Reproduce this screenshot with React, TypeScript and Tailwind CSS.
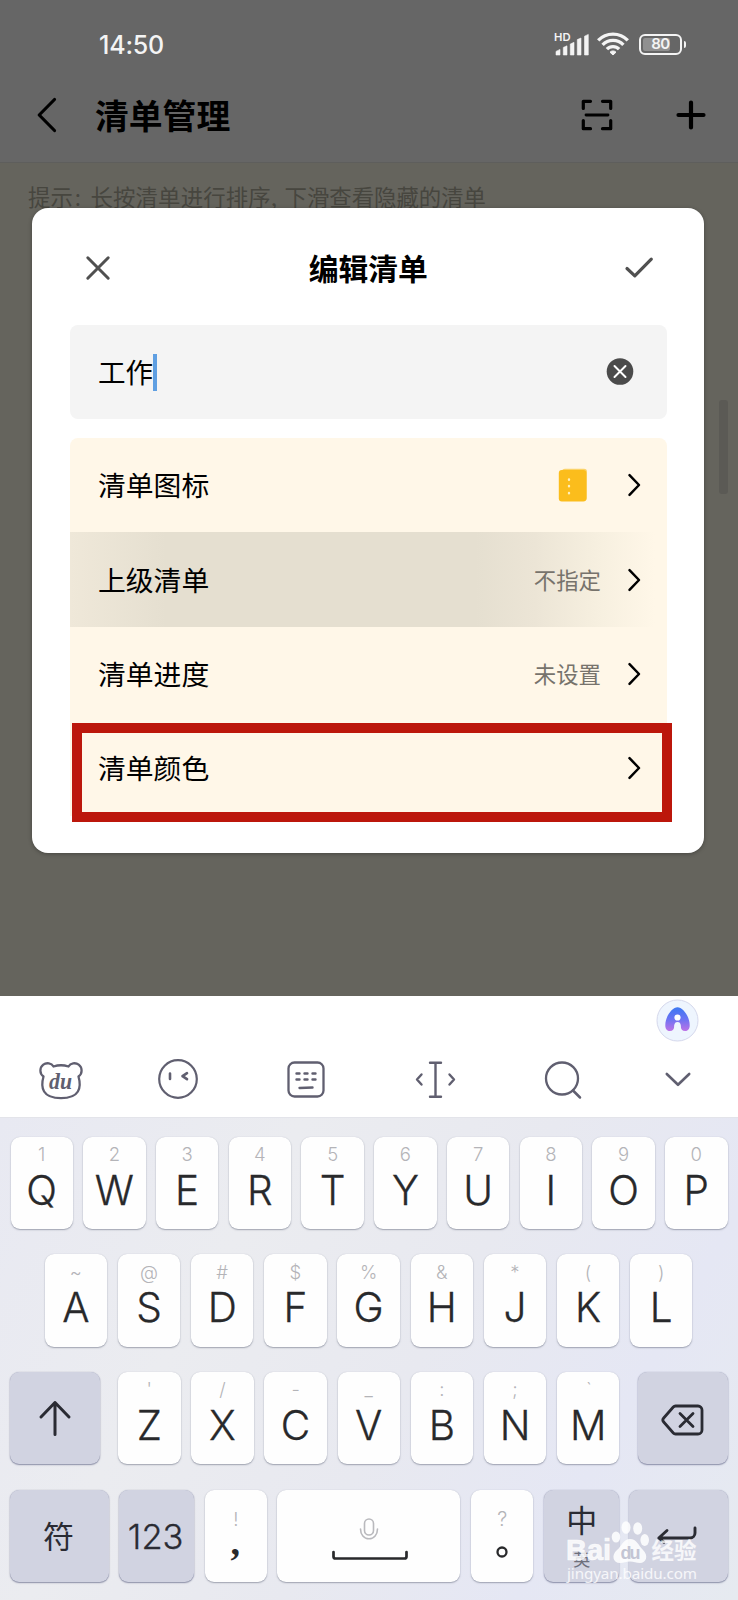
import React from "react";

type IconProps = { children: React.ReactNode; w: number; h: number; className?: string };

function Icon({ children, w, h, className = "" }: IconProps) {
  return (
    <svg
      width={w}
      height={h}
      viewBox={`0 0 ${w} ${h}`}
      fill="none"
      stroke="currentColor"
      strokeLinecap="round"
      strokeLinejoin="round"
      className={`block shrink-0 ${className}`}
    >
      {children}
    </svg>
  );
}

function StatusBar() {
  return (
    <div className="flex h-[88px] items-center pl-[99px] pr-[52px] text-[#f4f4f4]">
      <span className="mt-[1px] font-['Inter'] text-[25px] leading-[30px] font-medium tracking-[-0.2px]">14:50</span>
      <div className="ml-auto flex items-center">
        <svg width="36" height="26" viewBox="0 0 36 26" className="block" fill="#f4f4f4">
          <text x="0" y="9.5" fontSize="11" fontWeight="600" fontFamily="Inter, sans-serif" textLength="16.5" lengthAdjust="spacingAndGlyphs">
            HD
          </text>
          <path d="M2 24v-3.6l4-2V24zM9.3 24v-7.6l3.7-1.6V24zM16.3 24V13l3.7-1.7V24zM23.3 24V8.6L27 7v17zM30.5 24V5.2L34.3 3.4V24z" stroke="#f4f4f4" strokeWidth=".6" strokeLinejoin="round" />
        </svg>
        <svg width="34" height="26" viewBox="0 0 34 26" className="ml-[6px] block" fill="none" stroke="#f4f4f4" strokeWidth="3.3">
          <path d="M2.2 9.4a20.5 20.5 0 0 1 29.6 0" />
          <path d="M6.6 13.9a14.2 14.2 0 0 1 20.8 0" />
          <path d="M10.9 18.2a8.4 8.4 0 0 1 12.2 0" />
          <path d="M14 21.2a4.2 4.2 0 0 1 6 0L17 24z" fill="#f4f4f4" strokeWidth="1" strokeLinejoin="round" />
        </svg>
        <div className="relative ml-[9px] flex h-[21px] w-[43px] items-center justify-center rounded-[6px] border-2 border-[#f4f4f4]">
          <div className="absolute top-[2px] left-[2px] h-[13px] w-[27px] rounded-[2px] bg-[#909090]" />
          <span className="relative font-['Inter'] text-[15px] leading-[16px] font-semibold tracking-[-0.5px]">80</span>
        </div>
        <div className="ml-[1.5px] h-[7px] w-[2.5px] rounded-r-full bg-[#f4f4f4]" />
      </div>
    </div>
  );
}

function Header() {
  return (
    <div className="flex h-[75px] items-start border-b border-[#5e5e5c] pr-[32px] pl-[36px] text-black">
      <Icon w={22} h={36} className="mt-[9px]">
        <path d="M18.5 2.5 3.2 18l15.3 15.5" strokeWidth="3.2" />
      </Icon>
      <h1 className="mt-[4px] ml-[37px] font-['Noto_Sans_CJK_SC'] text-[33.8px] leading-[46px] font-bold">清单管理</h1>
      <div className="mt-[10px] ml-auto flex items-center gap-[62px]">
        <Icon w={34} h={34}>
          <path d="M3.3 10.5V3.3h7.2M22.5 3.3h8.2v7.2M3.3 22.5v8.2h7.2M22.5 30.7h8.2v-8.2" strokeWidth="3.2" />
          <path d="M6 17h22" strokeWidth="2.8" />
        </Icon>
        <Icon w={30} h={32}>
          <path d="M15 3.5v25M2.5 16h25" strokeWidth="4.2" />
        </Icon>
      </div>
    </div>
  );
}

function Chevron() {
  return (
    <Icon w={16} h={26} className="text-black">
      <path d="M3.5 3.2 13 13 3.5 22.8" strokeWidth="2.5" />
    </Icon>
  );
}

function Row({ label, shade, children }: { label: string; shade?: boolean; children?: React.ReactNode }) {
  return (
    <div
      className={`flex h-[94.4px] items-center pr-[25px] pl-[28px] ${
        shade
          ? "bg-[linear-gradient(90deg,#efe8d9_0%,#e5dfd0_16%,#e5dfd0_68%,#ece5d6_78%,#f6efdf_88%,#fff7e8_98%)]"
          : ""
      }`}
    >
      <span className="-mt-[2px] font-['Noto_Sans_CJK_SC'] text-[27.8px] leading-[40px] text-black">{label}</span>
      <div className="ml-auto flex items-center gap-[25px]">
        {children}
        <Chevron />
      </div>
    </div>
  );
}

function Value({ text }: { text: string }) {
  return <span className="-mt-[2px] font-['Noto_Sans_CJK_SC'] text-[22.4px] leading-[30px] text-[#77736c]">{text}</span>;
}

function Dialog() {
  return (
    <div className="absolute top-[208px] left-[32px] h-[645px] w-[672px] rounded-[16px] bg-white px-[38px] shadow-[0_1px_4px_rgba(0,0,0,0.3)]">
      <div className="flex h-[117px] items-center justify-between pr-[11px] pl-[14px] text-[#505050]">
        <Icon w={28} h={28} className="mt-[2px] ml-[-0.5px]">
          <path d="M3.8 3.8l20.4 20.4M24.2 3.8l-20.4 20.4" strokeWidth="3" />
        </Icon>
        <h2 className="mt-[0px] ml-[2px] font-['Noto_Sans_CJK_SC'] text-[29.8px] leading-[40px] font-bold text-black">编辑清单</h2>
        <Icon w={32} h={24} className="mt-[1px]">
          <path d="M4 13.5l7.8 7.3L28.3 4.2" strokeWidth="3.2" />
        </Icon>
      </div>
      <div className="flex h-[94px] w-[597px] items-center rounded-[8px] bg-[#f4f4f4] pr-[33.500px] pl-[28px]">
        <span className="-mt-[3px] font-['Noto_Sans_CJK_SC'] text-[27.6px] leading-[40px] text-black">工作</span>
        <div className="h-[37px] w-[4px] bg-[#5f9fe2]" />
        <Icon w={28} h={28} className="ml-auto">
          <circle cx="14" cy="13.5" r="13.3" fill="#4b4b4b" stroke="none" />
          <path d="M8.5 8l11 11M19.5 8l-11 11" stroke="#fff" strokeWidth="2" />
        </Icon>
      </div>
      <div className="relative mt-[19px] w-[597px] rounded-t-[8px] bg-[#fff7e8]">
        <Row label="清单图标">
          <div className="mr-[13px]">
            <Icon w={30} h={34}>
              <rect x="4" y="0.8" width="25" height="32" rx="3" fill="#fbd368" stroke="none" />
              <rect x="0.8" y="2" width="27.5" height="31.5" rx="3" fill="#fbbd1c" stroke="none" />
              <path d="M11 11.5v.2M11 18v.2M11 25v.2" stroke="#fff0bc" strokeWidth="2.4" />
            </Icon>
          </div>
        </Row>
        <Row label="上级清单" shade>
          <Value text="不指定" />
        </Row>
        <Row label="清单进度">
          <Value text="未设置" />
        </Row>
        <Row label="清单颜色" />
        <div className="absolute top-[285px] left-[2px] h-[99px] w-[600px] border-[10.3px] border-[#bc170b]" />
      </div>
    </div>
  );
}

function Toolbar() {
  return (
    <div className="h-[121px] bg-white text-[#605f70]">
      <div className="flex h-[48px] items-center justify-end pr-[39px]">
        <svg width="43" height="43" viewBox="0 0 43 43" className="block">
          <defs>
            <linearGradient id="ai" x1="0" y1="0" x2="0" y2="1">
              <stop offset="0" stopColor="#3b78f2" />
              <stop offset=".5" stopColor="#6b73f3" />
              <stop offset="1" stopColor="#bd72e6" />
            </linearGradient>
          </defs>
          <circle cx="21.5" cy="21.5" r="20.5" fill="#eef5fe" stroke="#d5d8ec" />
          <path
            d="M21.5 8.2c5 0 12.2 8.8 12.2 18 0 3.2-1.3 5.8-4.5 5.8-3 0-4.4-2-4.4-4.6 0-2-1.300-3.200-3.300-3.200s-3.300 1.200-3.300 3.200c0 2.600-1.400 4.600-4.400 4.600-3.200 0-4.500-2.600-4.500-5.800 0-9.200 7.200-18 12.200-18z"
            fill="url(#ai)"
          />
          <circle cx="21.500" cy="18.500" r="3.100" fill="#fff" />
          <path d="M18.500 32v-6a3 3 0 0 1 6 0v6z" fill="#eef5fe" />
        </svg>
      </div>
      <div className="flex h-[73px] items-start pl-[37px]">
        <Icon w={48} h={44} className="mt-[15px] -ml-[0.500px] mr-[0.500px]">
          <path
            d="M16.5 7.500c4.500-1.500 10.500-1.500 15 0 2-3.500 7-4.300 10.200-1.800 4 3.100 3.800 9-.2 11.800 1.300 4.600 2 10.700-.6 15-3 5-10 6.700-16.900 6.700s-13.900-1.700-16.900-6.700c-2.600-4.300-1.900-10.400-.6-15-4-2.800-4.200-8.700-.2-11.800 3.200-2.500 8.200-1.700 10.200 1.800z"
            strokeWidth="2.3"
          />
          <text x="12" y="29.500" fontFamily="Liberation Serif, serif" fontStyle="italic" fontWeight="700" fontSize="24" fill="currentColor" stroke="none" textLength="23" lengthAdjust="spacingAndGlyphs">
            du
          </text>
        </Icon>
        <Icon w={42} h={42} className="ml-[71.500px] mt-[14px]">
          <circle cx="21" cy="21" r="18.800" strokeWidth="2.200" />
          <path d="M13 15.500v5.500M30 15.200l-4.500 3 4.500 3" strokeWidth="2.600" />
        </Icon>
        <Icon w={40} h={40} className="ml-[87.500px] mt-[15.500px]">
          <rect x="2.500" y="2.500" width="35" height="34" rx="6" strokeWidth="2.300" />
          <path d="M10.500 13.500h3M18.500 13.500h3M26.500 13.500h3M10.500 19.500h3M18.500 19.500h3M26.500 19.500h3M13.500 28l13-.5" strokeWidth="2.400" />
        </Icon>
        <Icon w={46} h={40} className="ml-[86.500px] mt-[15.500px]">
          <path d="M17 2.700h11M17 36.800h11M22.500 2.700v34" strokeWidth="2.400" />
          <path d="M8.500 14.500 4 19.500l4.500 5M36.500 14.500l4.500 5-4.500 5" strokeWidth="2.400" />
        </Icon>
        <Icon w={40} h={40} className="ml-[84.500px] mt-[15.500px]">
          <circle cx="19" cy="18.500" r="16" strokeWidth="2.300" />
          <path d="M30 30.500l7 7" strokeWidth="2.500" />
        </Icon>
        <Icon w={28} h={18} className="ml-[81px] mt-[27px]">
          <path d="M2.800 3 14 13.800 25.200 3" strokeWidth="2.600" />
        </Icon>
      </div>
    </div>
  );
}

const keyBase = "flex h-[92.5px] shrink-0 flex-col items-center rounded-[9px]";
const light = "bg-[#fefefe] shadow-[0_1px_1.500px_rgba(90,95,115,0.500),0_0_1px_rgba(120,125,150,0.300)]";
const dark = "justify-center bg-[#d1d3e1] text-[#2a2b33] shadow-[0_1px_1.500px_rgba(80,85,120,0.600),0_0_1px_rgba(110,115,150,0.500)]";

function LetterKey({ hint, letter }: { hint: string; letter: string }) {
  return (
    <div className={`${keyBase} ${light} w-[62.400px] pt-[7.500px] font-['Inter']`}>
      <span className="text-[18.500px] leading-[20px] font-light text-[#b4b4b8]">{hint}</span>
      <span className="mt-[6.500px] text-[40.500px] leading-[40px] font-light text-[#28292b] [-webkit-text-stroke:0.300px_#28292b]">{letter}</span>
    </div>
  );
}

const row1 = [["1", "Q"], ["2", "W"], ["3", "E"], ["4", "R"], ["5", "T"], ["6", "Y"], ["7", "U"], ["8", "I"], ["9", "O"], ["0", "P"]];
const row2 = [["~", "A"], ["@", "S"], ["#", "D"], ["$", "F"], ["%", "G"], ["&", "H"], ["*", "J"], ["(", "K"], [")", "L"]];
const row3 = [["'", "Z"], ["/", "X"], ["-", "C"], ["_", "V"], [":", "B"], [";", "N"], ["ˋ", "M"]];

function Watermark() {
  return (
    <div className="absolute top-[1519px] left-[566px] w-[136px] text-white/80">
      <div className="flex h-[46px] items-end">
        <span className="w-[45px] font-['Liberation_Sans'] text-[29px] leading-[29px] font-bold [-webkit-text-stroke:0.7px_rgba(255,255,255,0.8)]">Bai</span>
        <svg width="39" height="45" viewBox="0 0 39 45" className="block" fill="#fff" fillOpacity=".85">
          <ellipse cx="5" cy="17" rx="4.300" ry="5.500" />
          <ellipse cx="15" cy="7.500" rx="4.500" ry="6.300" />
          <ellipse cx="26.700" cy="8.500" rx="4.500" ry="6.200" />
          <ellipse cx="33.700" cy="20" rx="4.300" ry="6" />
          <path d="M19 19c7 0 8 6 13 11 6 6 3 13-3 13-4 0-6-1.500-10-1.500S13 43 9 43c-7 0-9-8-3-13 5-4 6-11 13-11z" />
          <text x="9.500" y="39" fontFamily="Liberation Sans, sans-serif" fontWeight="700" fontSize="18" fill="#c3c5d4" fillOpacity="1" textLength="20">
            du
          </text>
        </svg>
        <span className="ml-[1.500px] font-['Noto_Sans_CJK_SC'] text-[22.500px] leading-[31px] font-bold">经验</span>
      </div>
      <div className="mt-[-2px] ml-[1px] font-['Noto_Sans'] text-[15.200px] leading-[20px] tracking-[-0.100px] whitespace-nowrap">jingyan.baidu.com</div>
    </div>
  );
}

function Keyboard() {
  return (
    <div className="flex h-[483px] flex-col gap-[25.200px] border-t border-[#e3e4ea] bg-[linear-gradient(120deg,#e8e9f2_0%,#ebecf0_30%,#e8e9f0_55%,#e5e7f4_78%,#e6eaf0_100%)] pt-[18.500px]">
      <div className="flex justify-between px-[10.500px]">
        {row1.map(([h, l]) => (
          <LetterKey key={l} hint={h} letter={l} />
        ))}
      </div>
      <div className="flex justify-between pr-[45.500px] pl-[44.700px]">
        {row2.map(([h, l]) => (
          <LetterKey key={l} hint={h} letter={l} />
        ))}
      </div>
      <div className="flex justify-between px-[10.300px]">
        <div className={`${keyBase} ${dark} w-[89.700px]`}>
          <Icon w={34} h={38}>
            <path d="M17 35.500V3.500M3 18 17 3.500 31 18" strokeWidth="3" />
          </Icon>
        </div>
        <div className="mr-[0.500px] flex gap-[10.750px]">
          {row3.map(([h, l]) => (
            <LetterKey key={l} hint={h} letter={l} />
          ))}
        </div>
        <div className={`${keyBase} ${dark} w-[89.700px]`}>
          <Icon w={44} h={34} className="mt-[3px]">
            <path d="M14.500 3H37a4 4 0 0 1 4 4v20a4 4 0 0 1-4 4H14.500a3 3 0 0 1-2.200-1L2.700 19a3 3 0 0 1 0-4l9.600-11a3 3 0 0 1 2.200-1z" strokeWidth="2.800" />
            <path d="M19 10.500l13 13M32 10.500l-13 13" strokeWidth="2.800" />
          </Icon>
        </div>
      </div>
      <div className="flex justify-between px-[10.300px]">
        <div className={`${keyBase} ${dark} w-[98.500px]`}>
          <span className="ml-[-2px] mt-[-2px] font-['Noto_Sans_CJK_SC'] text-[31px] leading-[40px]">符</span>
        </div>
        <div className={`${keyBase} ${dark} w-[74.700px]`}>
          <span className="mt-[3px] ml-[-2px] font-['Inter'] text-[34.500px] leading-[40px] font-light [-webkit-text-stroke:0.300px_#2a2b33]">123</span>
        </div>
        <div className={`${keyBase} ${light} w-[62.400px] pt-[19px]`}>
          <span className="font-['Inter'] text-[18.500px] leading-[20px] font-light text-[#b4b4b8]">!</span>
          <span className="mt-[-2px] ml-[-1px] font-['Liberation_Serif'] text-[38px] leading-[30px] font-bold text-[#28292b]">,</span>
        </div>
        <div className={`${keyBase} ${light} w-[183px] pt-[27px]`}>
          <Icon w={22} h={26} className="text-[#b9b9bd]">
            <rect x="6.500" y="2" width="9" height="16" rx="4.500" strokeWidth="1.600" />
            <path d="M2.500 12c0 5.500 3.500 9.800 8.500 9.800s8.500-4.300 8.500-9.800" strokeWidth="1.600" />
          </Icon>
          <Icon w={78} h={14} className="mt-[6.500px] ml-[2px] text-[#28292b]">
            <path d="M2.500 3v4.500a2 2 0 0 0 2 2h69a2 2 0 0 0 2-2V3" strokeWidth="2.700" />
          </Icon>
        </div>
        <div className={`${keyBase} ${light} w-[62.400px] pt-[18px]`}>
          <span className="font-['Inter'] text-[20px] leading-[22px] font-light text-[#b4b4b8]">?</span>
          <Icon w={14} h={14} className="mt-[15px] ml-[-1px] text-[#28292b]">
            <circle cx="7" cy="7" r="4.500" strokeWidth="2.300" />
          </Icon>
        </div>
        <div className={`${keyBase} ${dark} w-[74.700px] font-['Noto_Sans_CJK_SC']`}>
          <span className="mt-[-1px] ml-[1px] text-[31px] leading-[34px]">中</span>
          <span className="mt-[13px] ml-[1px] text-[17px] leading-[20px] text-[#6d6f7c]">英</span>
        </div>
        <div className={`${keyBase} ${dark} w-[98.500px]`}>
          <Icon w={42} h={24} className="ml-[-2px]">
            <path d="M39 4v5a5 5 0 0 1-5 5H3M11 6.500 2.800 14l5 4.200" strokeWidth="2.900" />
          </Icon>
        </div>
      </div>
    </div>
  );
}

export default function App() {
  return (
    <div className="relative flex h-[1600px] w-[738px] flex-col overflow-hidden bg-[#65645d]">
      <div className="relative h-[996px] bg-[#65645d]">
        <div className="bg-[#666666]">
          <StatusBar />
          <Header />
        </div>
        <p className="mt-[18px] flex pl-[28px] font-['Noto_Sans_CJK_SC'] text-[22.400px] leading-[30px] whitespace-nowrap text-[#47463f]">
          <span className="w-[62.500px]">
            提示<span className="pl-[2px]">:</span>
          </span>
          <span className="w-[194px] tracking-[0.150px]">长按清单进行排序,</span>
          <span>下滑查看隐藏的清单</span>
        </p>
        <div className="absolute top-[400px] left-[719px] h-[94px] w-[9px] rounded-[3px] bg-[#5b5a55]" />
        <Dialog />
      </div>
      <Toolbar />
      <Keyboard />
      <Watermark />
    </div>
  );
}
